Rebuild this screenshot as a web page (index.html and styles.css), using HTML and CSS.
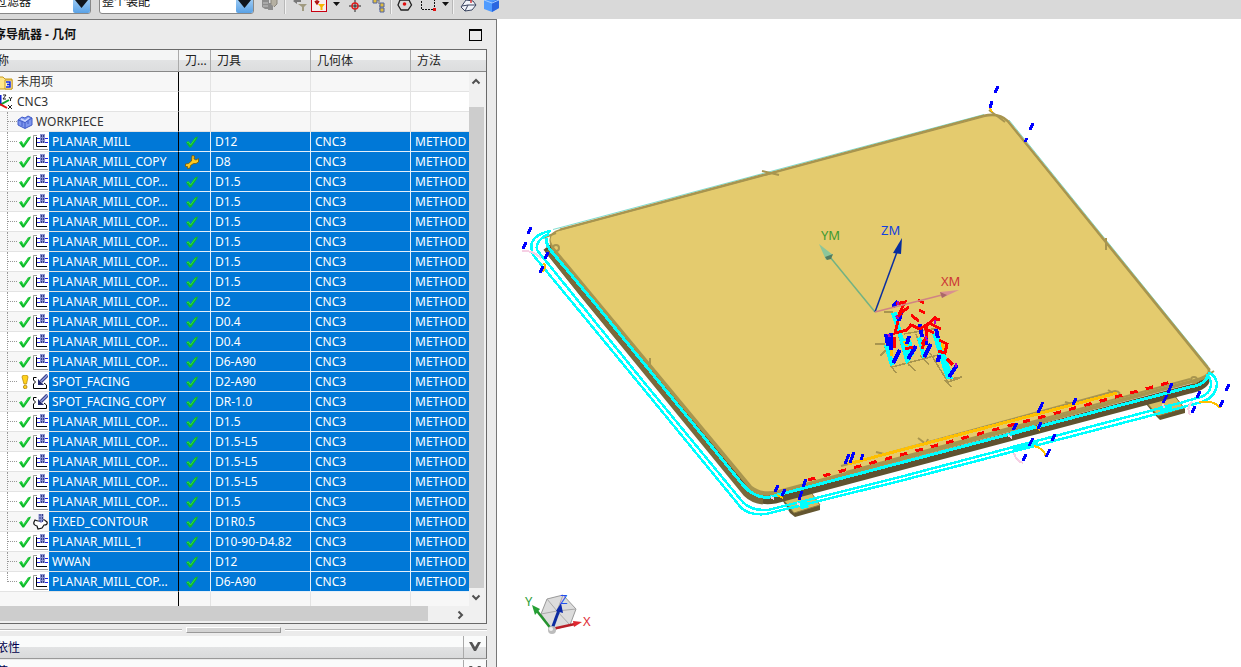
FILE: index.html
```html
<!DOCTYPE html>
<html lang="zh-CN">
<head>
<meta charset="utf-8">
<title>工序导航器 - 几何</title>
<link rel="stylesheet" href="styles.css">
</head>
<body>
<svg class="defs" aria-hidden="true">
  <linearGradient id="gArrow" x1="0" y1="0" x2="0" y2="1"><stop offset="0" stop-color="#c5e2fb"/><stop offset="1" stop-color="#5aa2e6"/></linearGradient>
  <symbol id="ok" viewBox="0 0 14 14"><path d="M1 7.5 3.5 6 5.5 9 10 2.5 13 1.5 12 4 6 12.5 4.5 12.5Z" fill="#10b82a"/><path d="M2 7.5 3.5 7 5.5 10 10.5 3.5" fill="none" stroke="#2ae04a"/></symbol>
  <symbol id="warn" viewBox="0 0 14 14"><path d="M4 2Q4 0 7 0T10 2L8.5 9H6Z" fill="#ffd21c" stroke="#b98a10" stroke-width=".8"/><circle cx="7.2" cy="12" r="1.8" fill="#ffd21c" stroke="#a87a10" stroke-width=".8"/></symbol>
  <symbol id="wrench" viewBox="0 0 14 14"><path d="M7 .5 9.500 1 9 4 11 5 13.500 3.500V7L11 8.500H8.500L5.500 10.500 5 13 2.500 13.500 2.500 11.500H.5V9L3.500 8.500 6.500 6Z" fill="#ffca20" stroke="#7a5800" stroke-width=".8"/></symbol>
  <symbol id="mill" viewBox="0 0 15 16"><path d="M0 0H15V16H0Z" fill="#fff"/><path d="M4 1.500H.5V15.500H15" fill="none" stroke="#999"/><path d="M3.500 3V12.500H14" fill="none" stroke="#000"/><path d="M4 4.500H7M4 8.500H7M12 4.500H15M12 8.500H15" stroke="#2020e8"/><path d="M7 0H12V9H7Z" fill="#8b92cf"/><path d="M8.500 1V9M10.500 1V9" stroke="#343c86" stroke-dasharray="2 1"/></symbol>
  <symbol id="spot" viewBox="0 0 15 16"><path d="M0 1H15V16H0Z" fill="#fff"/><path d="M3.500 3.500H.5V6L2.500 8 .5 10V14.500H13.500V11L11 9" fill="none" stroke="#000"/><path d="M14.500 1 8 7.500" stroke="#30387e" stroke-width="3.400"/><path d="M14.500 1 8 7.500" stroke="#8f98dc" stroke-width="1.600"/><path d="M5 5V11H11L8 8Z" fill="#222a70"/></symbol>
  <symbol id="contour" viewBox="0 0 15 16"><path d="M2 6Q6 8 8 6T14 8Q15 11 11 11L9 14 5 15 4 12Q0 11 1 8Z" fill="#fff" stroke="#111" stroke-width="1.200"/><path d="M5.500 0H10.500V7L8 9 5.500 7Z" fill="#8b92cf"/><path d="M7 0V8M9.500 0V8" stroke="#343c86" stroke-dasharray="2 1"/></symbol>
  <symbol id="chev" viewBox="0 0 10 10"><path d="M1.500 3.500 5 7 8.500 3.500" fill="none" stroke="#505050" stroke-width="2"/></symbol>
</svg>

<div class="app">
  <header class="toolbar">
    <div class="combo combo-filter">
      <select aria-label="选择过滤器"><option>过滤器</option></select>
      <svg class="combo-arrow" viewBox="0 0 17 22"><rect width="17" height="22" rx="2" fill="url(#gArrow)"/><path d="M2 9H15L8.500 17Z" fill="#10151c"/></svg>
    </div>
    <div class="combo combo-scope">
      <select aria-label="选择范围"><option>整个装配</option></select>
      <svg class="combo-arrow" viewBox="0 0 17 22"><rect width="17" height="22" rx="2" fill="url(#gArrow)"/><path d="M2 9H15L8.500 17Z" fill="#10151c"/></svg>
    </div>
    <button class="tool" type="button" aria-label="部件"><svg viewBox="0 0 22 24"><path d="M3 6H8V10H10V19H6L3 17ZM10 13H14V20H9" fill="#8d8d8d"/><path d="M4 13H9M4 16H9" stroke="#c5c5c5"/><path d="M12 14V9H18V14L15 17" fill="#b5b0a2" stroke="#89857a"/></svg></button>
    <span class="sep"></span>
    <button class="tool" type="button" aria-label="重置过滤器"><svg viewBox="0 0 22 24"><path d="M4 11 8 8V14Z" fill="#777"/><path d="M7 11H12" stroke="#777" stroke-width="2"/><path d="M9 14H18L15 17V21H13V17Z" fill="#a09a80"/></svg></button>
    <button class="tool" type="button" aria-label="过滤"><svg viewBox="0 0 22 24"><rect x=".5" y="4.500" width="15" height="17" fill="#f8eeee" stroke="#c80010"/><path d="M4 11 6 14 8 11M6 9V14" fill="none" stroke="#b01010" stroke-width="1.500"/><path d="M7 14H14L11.500 17V20H9.500V17Z" fill="#f7b500"/></svg></button>
    <button class="caret" type="button" aria-label="更多过滤"><svg viewBox="0 0 10 24"><path d="M0 12H7L3.500 16Z" fill="#111"/></svg></button>
    <button class="tool" type="button" aria-label="捕捉点"><svg viewBox="0 0 22 24"><path d="M12 10V22M6 16H18" stroke="#222"/><circle cx="12" cy="16" r="3" fill="none" stroke="#e02020" stroke-width="1.500"/></svg></button>
    <button class="tool" type="button" aria-label="导航树"><svg viewBox="0 0 22 24"><path d="M9 10H14V14M15 15V20H18" fill="none" stroke="#666"/><path d="M8 9H12V13H8ZM15 13H19V17H15ZM15 18H19V22H15Z" fill="#e0bd3e" stroke="#5062a0"/></svg></button>
    <span class="sep"></span>
    <button class="tool" type="button" aria-label="定向"><svg viewBox="0 0 22 24"><path d="M5 10H14L16.500 15 13 20H6L3 15Z" fill="none" stroke="#222" stroke-width="1.300"/><circle cx="9.500" cy="14" r="1.800" fill="#e01010"/></svg></button>
    <button class="tool" type="button" aria-label="矩形选择"><svg viewBox="0 0 22 24"><path d="M4.500 8V19.500H17.500V8" fill="none" stroke="#111" stroke-dasharray="2 1"/><path d="M16 18H19V21H16Z" fill="#e01010"/></svg></button>
    <button class="caret" type="button" aria-label="更多选择"><svg viewBox="0 0 10 24"><path d="M3 12H10L6.500 16Z" fill="#111"/></svg></button>
    <span class="sep"></span>
    <button class="tool" type="button" aria-label="边框显示"><svg viewBox="0 0 22 24"><path d="M4 17 9 10 16 11 19 15 15 20 8 21Z" fill="#f2f4fa" stroke="#3b4560"/><path d="M8 21 11 15 19 15M11 15 5 16" fill="none" stroke="#3b4560"/><path d="M8 9H14V13" fill="none" stroke="#e04040" stroke-width="1.500"/></svg></button>
    <button class="tool" type="button" aria-label="着色"><svg viewBox="0 0 22 24"><path d="M5 8H20V18L13 22 5 19Z" fill="#4f9bff"/><path d="M13 12V22L20 18V9Z" fill="#2b66e0"/><path d="M5 10 13 13 20 10" fill="none" stroke="#a5cdff"/></svg></button>
  </header>

  <div class="work">
    <aside class="panel">
      <div class="title">
        <h1>序导航器 - 几何</h1>
        <button class="max" type="button" aria-label="最大化"></button>
      </div>
      <div class="frame">
        <div class="body">
          <table>
            <colgroup><col class="c-name"><col class="c-path"><col class="c-tool"><col class="c-geo"><col class="c-method"></colgroup>
            <thead><tr><th>称</th><th>刀...</th><th>刀具</th><th>几何体</th><th>方法</th></tr></thead>
            <tbody>
              <tr><td><div class="node root"><svg class="ic16" viewBox="0 0 16 16"><path d="M1 3H6L8 5H15V15H1Z" fill="#ffe68a" stroke="#c79a1c"/><path d="M8 6H15V15H8Z" fill="#fff4c8" stroke="#c79a1c"/><path d="M9 8H13V13H9M10 10.500H13" fill="none" stroke="#1028e8" stroke-width="1.500"/></svg><span>未用项</span></div></td><td></td><td></td><td></td><td></td></tr>
              <tr><td><div class="node root"><svg class="ic16" viewBox="0 0 16 16"><path d="M3 11 12 6" fill="none" stroke="#10a030" stroke-width="2"/><path d="M3.500 1V10" stroke="#1020d0" stroke-width="2"/><path d="M3 10 10 14" stroke="#e01010" stroke-width="2"/><path d="M6 1H9L6 5H9M12 3 13.500 5 15 3M13.500 5V7M11 11 15 15M15 11 11 15" fill="none" stroke="#222"/></svg><span>CNC3</span></div></td><td></td><td></td><td></td><td></td></tr>
              <tr><td><div class="node work-node"><i class="dots"></i><svg class="ic16" viewBox="0 0 16 16"><path d="M1 6 5 3 8 4 11 2 15 4V11L8 14.500 1 11Z" fill="#7f97ee" stroke="#405ac8"/><path d="M1 6 8 8.500 15 4M8 8.500V14M11 7V10M5 8V12" fill="none" stroke="#405ac8"/><path d="M4 5 8 7 12 4" fill="none" stroke="#cdd8ff" stroke-width="1.500"/></svg><span>WORKPIECE</span></div></td><td></td><td></td><td></td><td></td></tr>
              <tr class="sel"><td><div class="node"><i class="dots"></i><svg class="ic14"><use href="#ok"/></svg><svg class="op"><use href="#mill"/></svg><span>PLANAR_MILL</span></div></td><td><svg class="ic14"><use href="#ok"/></svg></td><td>D12</td><td>CNC3</td><td>METHOD</td></tr>
              <tr class="sel"><td><div class="node"><i class="dots"></i><svg class="ic14"><use href="#ok"/></svg><svg class="op"><use href="#mill"/></svg><span>PLANAR_MILL_COPY</span></div></td><td><svg class="ic14"><use href="#wrench"/></svg></td><td>D8</td><td>CNC3</td><td>METHOD</td></tr>
              <tr class="sel"><td><div class="node"><i class="dots"></i><svg class="ic14"><use href="#ok"/></svg><svg class="op"><use href="#mill"/></svg><span>PLANAR_MILL_COP...</span></div></td><td><svg class="ic14"><use href="#ok"/></svg></td><td>D1.5</td><td>CNC3</td><td>METHOD</td></tr>
              <tr class="sel"><td><div class="node"><i class="dots"></i><svg class="ic14"><use href="#ok"/></svg><svg class="op"><use href="#mill"/></svg><span>PLANAR_MILL_COP...</span></div></td><td><svg class="ic14"><use href="#ok"/></svg></td><td>D1.5</td><td>CNC3</td><td>METHOD</td></tr>
              <tr class="sel"><td><div class="node"><i class="dots"></i><svg class="ic14"><use href="#ok"/></svg><svg class="op"><use href="#mill"/></svg><span>PLANAR_MILL_COP...</span></div></td><td><svg class="ic14"><use href="#ok"/></svg></td><td>D1.5</td><td>CNC3</td><td>METHOD</td></tr>
              <tr class="sel"><td><div class="node"><i class="dots"></i><svg class="ic14"><use href="#ok"/></svg><svg class="op"><use href="#mill"/></svg><span>PLANAR_MILL_COP...</span></div></td><td><svg class="ic14"><use href="#ok"/></svg></td><td>D1.5</td><td>CNC3</td><td>METHOD</td></tr>
              <tr class="sel"><td><div class="node"><i class="dots"></i><svg class="ic14"><use href="#ok"/></svg><svg class="op"><use href="#mill"/></svg><span>PLANAR_MILL_COP...</span></div></td><td><svg class="ic14"><use href="#ok"/></svg></td><td>D1.5</td><td>CNC3</td><td>METHOD</td></tr>
              <tr class="sel"><td><div class="node"><i class="dots"></i><svg class="ic14"><use href="#ok"/></svg><svg class="op"><use href="#mill"/></svg><span>PLANAR_MILL_COP...</span></div></td><td><svg class="ic14"><use href="#ok"/></svg></td><td>D1.5</td><td>CNC3</td><td>METHOD</td></tr>
              <tr class="sel"><td><div class="node"><i class="dots"></i><svg class="ic14"><use href="#ok"/></svg><svg class="op"><use href="#mill"/></svg><span>PLANAR_MILL_COP...</span></div></td><td><svg class="ic14"><use href="#ok"/></svg></td><td>D2</td><td>CNC3</td><td>METHOD</td></tr>
              <tr class="sel"><td><div class="node"><i class="dots"></i><svg class="ic14"><use href="#ok"/></svg><svg class="op"><use href="#mill"/></svg><span>PLANAR_MILL_COP...</span></div></td><td><svg class="ic14"><use href="#ok"/></svg></td><td>D0.4</td><td>CNC3</td><td>METHOD</td></tr>
              <tr class="sel"><td><div class="node"><i class="dots"></i><svg class="ic14"><use href="#ok"/></svg><svg class="op"><use href="#mill"/></svg><span>PLANAR_MILL_COP...</span></div></td><td><svg class="ic14"><use href="#ok"/></svg></td><td>D0.4</td><td>CNC3</td><td>METHOD</td></tr>
              <tr class="sel"><td><div class="node"><i class="dots"></i><svg class="ic14"><use href="#ok"/></svg><svg class="op"><use href="#mill"/></svg><span>PLANAR_MILL_COP...</span></div></td><td><svg class="ic14"><use href="#ok"/></svg></td><td>D6-A90</td><td>CNC3</td><td>METHOD</td></tr>
              <tr class="sel"><td><div class="node"><i class="dots"></i><svg class="ic14"><use href="#warn"/></svg><svg class="op"><use href="#spot"/></svg><span>SPOT_FACING</span></div></td><td><svg class="ic14"><use href="#ok"/></svg></td><td>D2-A90</td><td>CNC3</td><td>METHOD</td></tr>
              <tr class="sel"><td><div class="node"><i class="dots"></i><svg class="ic14"><use href="#ok"/></svg><svg class="op"><use href="#spot"/></svg><span>SPOT_FACING_COPY</span></div></td><td><svg class="ic14"><use href="#ok"/></svg></td><td>DR-1.0</td><td>CNC3</td><td>METHOD</td></tr>
              <tr class="sel"><td><div class="node"><i class="dots"></i><svg class="ic14"><use href="#ok"/></svg><svg class="op"><use href="#mill"/></svg><span>PLANAR_MILL_COP...</span></div></td><td><svg class="ic14"><use href="#ok"/></svg></td><td>D1.5</td><td>CNC3</td><td>METHOD</td></tr>
              <tr class="sel"><td><div class="node"><i class="dots"></i><svg class="ic14"><use href="#ok"/></svg><svg class="op"><use href="#mill"/></svg><span>PLANAR_MILL_COP...</span></div></td><td><svg class="ic14"><use href="#ok"/></svg></td><td>D1.5-L5</td><td>CNC3</td><td>METHOD</td></tr>
              <tr class="sel"><td><div class="node"><i class="dots"></i><svg class="ic14"><use href="#ok"/></svg><svg class="op"><use href="#mill"/></svg><span>PLANAR_MILL_COP...</span></div></td><td><svg class="ic14"><use href="#ok"/></svg></td><td>D1.5-L5</td><td>CNC3</td><td>METHOD</td></tr>
              <tr class="sel"><td><div class="node"><i class="dots"></i><svg class="ic14"><use href="#ok"/></svg><svg class="op"><use href="#mill"/></svg><span>PLANAR_MILL_COP...</span></div></td><td><svg class="ic14"><use href="#ok"/></svg></td><td>D1.5-L5</td><td>CNC3</td><td>METHOD</td></tr>
              <tr class="sel"><td><div class="node"><i class="dots"></i><svg class="ic14"><use href="#ok"/></svg><svg class="op"><use href="#mill"/></svg><span>PLANAR_MILL_COP...</span></div></td><td><svg class="ic14"><use href="#ok"/></svg></td><td>D1.5</td><td>CNC3</td><td>METHOD</td></tr>
              <tr class="sel"><td><div class="node"><i class="dots"></i><svg class="ic14"><use href="#ok"/></svg><svg class="op"><use href="#contour"/></svg><span>FIXED_CONTOUR</span></div></td><td><svg class="ic14"><use href="#ok"/></svg></td><td>D1R0.5</td><td>CNC3</td><td>METHOD</td></tr>
              <tr class="sel"><td><div class="node"><i class="dots"></i><svg class="ic14"><use href="#ok"/></svg><svg class="op"><use href="#mill"/></svg><span>PLANAR_MILL_1</span></div></td><td><svg class="ic14"><use href="#ok"/></svg></td><td>D10-90-D4.82</td><td>CNC3</td><td>METHOD</td></tr>
              <tr class="sel"><td><div class="node"><i class="dots"></i><svg class="ic14"><use href="#ok"/></svg><svg class="op"><use href="#mill"/></svg><span>WWAN</span></div></td><td><svg class="ic14"><use href="#ok"/></svg></td><td>D12</td><td>CNC3</td><td>METHOD</td></tr>
              <tr class="sel"><td><div class="node last"><i class="dots"></i><svg class="ic14"><use href="#ok"/></svg><svg class="op"><use href="#mill"/></svg><span>PLANAR_MILL_COP...</span></div></td><td><svg class="ic14"><use href="#ok"/></svg></td><td>D6-A90</td><td>CNC3</td><td>METHOD</td></tr>
              <tr><td></td><td></td><td></td><td></td><td></td></tr>
            </tbody>
          </table>
          <div class="vscroll">
            <span class="cap"></span>
            <button class="up" type="button" aria-label="向上滚动"><svg class="chev"><use href="#chev"/></svg></button>
            <span class="vthumb"></span>
            <button class="down" type="button" aria-label="向下滚动"><svg class="chev"><use href="#chev"/></svg></button>
          </div>
        </div>
        <div class="hscroll">
          <span class="hthumb"></span>
          <button class="right" type="button" aria-label="向右滚动"><svg class="chev"><use href="#chev"/></svg></button>
        </div>
      </div>
      <div class="splitter"><i class="rule"></i><i class="grip"></i><i class="rule"></i></div>
      <section class="fold"><h2>依性</h2><button type="button" aria-label="展开相依性"><svg viewBox="0 0 12 10"><path d="M0 0H3L6 5 9 0H12L7 9H5Z" fill="#555"/></svg></button></section>
      <section class="fold"><h2>节</h2><button type="button" aria-label="展开细节"><svg viewBox="0 0 12 10"><path d="M0 0H3L6 5 9 0H12L7 9H5Z" fill="#555"/></svg></button></section>
    </aside>

    <main class="view">
      <svg class="scene" viewBox="497 19 744 648" preserveAspectRatio="xMinYMin meet" role="img" aria-label="刀轨三维视图">
        <!-- clamping tabs -->
        <g stroke-linejoin="round">
          <path d="M780 496 810 492 820 505V510L795 517 790 513Z" fill="#645630"/>
          <path d="M778 493 808 488 820 505 794 513Z" fill="#d5bd67" stroke="#8d7b43"/>
          <path d="M1146 404 1175 396 1185 409V413L1160 420 1155 415Z" fill="#645630"/>
          <path d="M1146 402 1174 395 1184 408 1158 416Z" fill="#d5bd67" stroke="#8d7b43"/>
        </g>
        <!-- plate sides -->
        <path d="M547 247 583 292 748 491Q757 502 775 499L1190 389Q1205 386 1206 378" fill="none" stroke="#5f5230" stroke-width="9"/>
        <path d="M548 250 584 295 746 493Q753 500 763 501" fill="none" stroke="#7a6a3c" stroke-width="7"/>
        <!-- top face -->
        <path d="M560 229 984 116Q999 112 1008 121L1210 370Q1214 377 1197 382L778 494Q760 499 750 490L552 250Q544 233 560 229Z" fill="#a8954f"/>
        <path d="M563 230 985 117Q999 114 1007 122L1207 369Q1211 375 1194 379L778 490Q762 494 752 486L553 246Q545 234 563 230Z" fill="#e4cb6e"/>
        <path d="M553 229.500 984 114.500M1009 120 1208 366" stroke="#7fded0" stroke-width="1"/>
        <path d="M560 229.500 984 115.500Q999 112 1008 121L1210 370" fill="none" stroke="#a8954f" stroke-width="2"/>
        <!-- front grooves -->
        <path d="M841 466 1115 391Q1122 392 1118 396M846 472 1190 379" fill="none" stroke="#a8954f" stroke-width="2"/>
        <path d="M1000 432 1016 424V430Z" fill="#a8954f"/>
        <g fill="none" stroke="#a8954f" stroke-width="2">
          <path d="M762 171 779 175M764 175 776 172M989 110 1005 122M1106 238V250M650 358V370M543 238 556 233M1203 378 1214 371M918 438 926 444 928 439M876 452 884 454M1108 390 1115 394M1065 402 1072 404"/>
          <circle cx="556" cy="248" r="3"/><circle cx="1194" cy="380" r="3"/>
        </g>
        <g shape-rendering="crispEdges">
        <path d="M848 464 1117 393" stroke="#ffc000" stroke-width="3"/>
        <path d="M808 480 1171 382" stroke="#f00" stroke-width="3" stroke-dasharray="7.500 8.400"/>
        <!-- profile tool paths -->
        <g fill="none" stroke="#0ff">
          <path d="M547 238Q545 244 552 252L593 301 743 485Q755 499 770 497L1060 421 1190 387Q1206 385 1208 374" stroke-width="3"/>
          <path d="M551 231Q537 233 532 242 530 250 534 256L637 381 738 504Q746 516 766 514L900 481 1180 408 1198 403Q1216 399 1217 383 1215 374 1208 373" stroke-width="2.500"/>
          <path d="M549 234Q535 240 537 250L643 381 741 500Q749 511 768 510L900 477 1180 403 1197 398Q1211 395 1211 383 1210 376 1206 375" stroke-width="2.500"/>
          <path d="M1013 449 1038 443M800 506 808 504M1160 410 1172 407" stroke-width="7"/>
          <path d="M1010 434 1034 427" stroke-width="4"/>
        </g>
        <!-- engage and retract arcs -->
        <g fill="none" stroke-width="2">
          <path d="M522 251Q532 250 541 258M1014 453Q1016 461 1023 463M1192 402Q1186 408 1190 415M771 497 774 499M797 503 800 505M1008 435 1012 438M1163 404 1164 408" stroke="#f6cfe4"/>
          <path d="M544 263Q547 269 541 272M1034 446Q1044 448 1046 457M1199 402Q1215 400 1220 408M777 495 783 498M1036 427 1040 430M990 108 992 112" stroke="#ffc000"/>
        </g>
        <path d="M531 227 528 234M526 242 523 249M548 252 545 259M543 266 540 273M998 86 995 93M992 101 990 108M1033 123 1030 130M1027 138 1025 142M778 485 775 492M785 489 782 496M806 479 803 487M802 491 799 500M849 454 845 464M854 452 850 463M863 454 861 460M1043 402 1038 413M1076 398 1073 405M1017 423 1013 430M1041 422 1038 429M1033 438 1029 446M1055 434 1052 441M1026 454 1023 461M1050 449 1046 457M1172 383 1168 393M1167 395 1163 403M1200 391 1197 398M1195 406 1192 413M1229 384 1226 391M1223 400 1220 407" stroke="#00f" stroke-width="3"/>
        <!-- engraved character tool paths -->
        <path d="M884 312H892L904 354 909 366M875 344H884L892 367 938 355M885 351 880 356M891 366 896 373M907 362 915 371M920 356 929 364M930 353 948 382 960 378M945 380 951 387M950 379 962 377M916 334 924 358M904 334 938 328" fill="none" stroke="#a8954f" stroke-width="1.500"/>
        <path d="M891 313 897 312 902 334 911 360 906 364 900 342ZM884 345 890 346 894 365 890 366ZM907 338 911 340 914 354 908 361 904 339ZM917 338 921 337 925 353 923 360ZM932 333 939 334 951 371 953 379 946 379Z" fill="#0ff"/>
        <path d="M904 341 907 346M942 343 944 350M922 343 924 347M891 350 892 356" stroke="#ffc000" stroke-width="3"/>
        <path d="M898 301 893 307M901 312 899 321M886 334 888 346M891 333 891 350M900 350 893 363M909 336 907 344M916 346 908 359M920 324 922 337M926 338V345M931 344 924 357M936 329 938 338M939 355 938 362M957 365 949 377" stroke="#00f" stroke-width="4"/>
        <path d="M896 304 905 302 899 314 909 307M896 318 902 313M898 321 895 333 907 330 911 325 920 329 929 323 941 329M936 317 926 326 927 336 922 344M919 310 925 313M911 315 919 321M933 318 940 320M895 337 894 348M905 349 913 347M922 349 924 343M939 340 947 344 945 353 938 351M947 359 953 365M924 328 934 333M918 300 924 303" fill="none" stroke="#f00" stroke-width="3"/>
        <path d="M898 301V305M896 316 899 319M888 334 890 337M935 320V324M926 336 927 341M956 363V367" stroke="#b000c8" stroke-width="2"/>
        </g>
        <!-- machine coordinate system -->
        <path d="M875 312 830 257" stroke="#72b283" stroke-width="1.500"/><path d="M819 244 833 255 826 260Z" fill="#8cc69a"/><path d="M825 257 833 254 831 259 827 260Z" fill="#547c60"/>
        <path d="M875 312 897 252" stroke="#0a2ea0" stroke-width="1.500"/><path d="M902 238 901 254 893 253Z" fill="#062d9e"/>
        <path d="M875 312 942 295" stroke="#d08484" stroke-width="1.500"/><path d="M959 290 942 298 940 292Z" fill="#d99090"/><path d="M940 292 947 295 942 298Z" fill="#a86868"/>
        <g class="axis">
          <text x="821" y="240" fill="#3f9a30">YM</text><text x="881" y="235" fill="#1240e0">ZM</text><text x="941" y="286" fill="#cc3636">XM</text>
        </g>
        <!-- view triad -->
        <path d="M547 599 563 595 576 609 570 625 552 630 541 614Z" fill="#dcdcdc" stroke="#999"/>
        <path d="M547 599 557 611 576 609M563 595 557 611 541 614M557 611 570 625" fill="none" stroke="#aaa"/>
        <path d="M552 630 537 611" stroke="#25932f" stroke-width="2.500"/><path d="M532 605 540 609 535 615Z" fill="#25a035"/>
        <path d="M552 629 575 624" stroke="#b82028" stroke-width="2.500"/><path d="M582 622 574 627 573 621Z" fill="#e02830"/>
        <path d="M552 629 559 610" stroke="#0c2ca0" stroke-width="3"/><path d="M561 603 563 613 556 611Z" fill="#0a28a8"/>
        <circle cx="552" cy="630" r="4" fill="#bcbcbc"/><circle cx="551" cy="629" r="2" fill="#eee"/>
        <g class="axis">
          <text x="525" y="606" fill="#31a03a">Y</text><text x="560" y="604" fill="#2450f0">Z</text><text x="583" y="626" fill="#e03038">X</text>
        </g>
      </svg>
    </main>
  </div>
</div>
</body>
</html>
```
FILE: styles.css
```css
* { box-sizing: border-box; }
body {
  margin: 0;
  overflow: hidden;
  background: #fff;
  color: #333;
  font: 12px/16px "Noto Sans", "Noto Sans CJK SC", sans-serif;
}
button { margin: 0; padding: 0; border: 0; background: none; font: inherit; }
svg { display: block; flex: none; }
.defs { position: absolute; width: 0; height: 0; }
.app { display: flex; flex-direction: column; height: 100vh; overflow: hidden; }

/* toolbar, scrolled partly out of the window */
.toolbar {
  display: flex;
  flex: none;
  align-items: center;
  height: 31px;
  margin: -12px 0 0 -20px;
  padding-bottom: 3px;
  background: #d9d9d9;
}
.combo {
  display: flex;
  height: 24px;
  border: 1px solid #888;
  border-radius: 3px;
  background: #fff;
}
.combo select {
  flex: 1;
  min-width: 0;
  padding: 0 2px;
  border: 0;
  appearance: none;
  background: none;
  color: #111;
  font: inherit;
}
.combo-filter { width: 111px; margin-right: 8px; }
.combo-filter select { padding-left: 14px; }
.combo-scope { width: 155px; margin-right: 5px; }
.combo-arrow { width: 17px; height: 22px; }
.tool, .tool svg { width: 22px; height: 24px; }
.caret, .caret svg { width: 10px; height: 24px; }
.sep { width: 2px; height: 24px; margin: 0 3px; border-left: 1px solid #b8b8b8; border-right: 1px solid #f2f2f2; }

.work { display: flex; flex: 1; min-height: 0; }

/* navigator panel, its left edge outside the window */
.panel {
  flex: none;
  width: 517px;
  margin-left: -20px;
  padding-right: 9px;
  border-top: 1px solid #777;
  border-right: 1px solid #777;
  background: #ebebeb;
  overflow: hidden;
}
.title { display: flex; align-items: center; justify-content: space-between; height: 29px; padding: 0 5px 0 14px; }
.title h1 { margin: 0; color: #111; font-size: 12px; font-weight: 700; }
.max { width: 13px; height: 12px; border: 1px solid #000; border-top-width: 2px; }
.frame { border: 1px solid #696969; border-width: 1px 1px 1px 0; background: #f0f0f0; }
.body { display: flex; height: 556px; overflow: hidden; }
table { flex: none; width: 489px; height: 0; border-spacing: 0; table-layout: fixed; }
.c-name { width: 199px; }
.c-path { width: 32px; }
.c-tool, .c-geo { width: 100px; }
.c-method { width: 58px; }
th {
  height: 22px;
  padding: 0 6px;
  border-right: 1px solid #aaa;
  border-bottom: 1px solid #888;
  background: linear-gradient(#f4f5f5 50%, #e2e3e4 50%, #dcddde);
  color: #222;
  font-weight: 400;
  text-align: left;
  white-space: nowrap;
}
th:first-child { padding-left: 17px; }
th:last-child, td:last-child { border-right: 0; }
td {
  height: 20px;
  padding: 0 4px;
  border-right: 1px solid #e3e3e3;
  border-bottom: 1px solid #e3e3e3;
  white-space: nowrap;
  overflow: hidden;
}
td:first-child { padding: 0; border-right-color: #000; }
td:nth-child(2) { padding-left: 6px; }
tbody tr { background: #fff; }
tbody tr:nth-child(odd) { background: #f7f7f7; }
.sel td { border-color: #e3effa; background: #0078d7; color: #fff; }
.sel td:first-child { border-color: #e3e3e3 #000 #e3e3e3 transparent; background: none; }
.sel td:last-child { padding-right: 0; }
.node { display: flex; align-items: center; height: 19px; padding-left: 27px; }
.node span { flex: 1; align-self: stretch; padding-left: 3px; line-height: 19px; }
.sel .node span { margin-left: 1px; background: #0078d7; }
.root { padding-left: 17px; }
.root span { padding-left: 4px; }
.dots { width: 11px; height: 20px; border-left: 1px dotted #999; background: repeating-linear-gradient(90deg, #999 0 1px, transparent 1px 2px) 0 50% / 9px 1px no-repeat; }
.last .dots { height: 10px; align-self: flex-start; background-position: 0 100%; }
.work-node .dots { width: 10px; }
.ic14 { width: 14px; height: 14px; margin-top: 1px; }
.ic16 { width: 16px; height: 16px; margin-top: 1px; }
.op { width: 15px; height: 16px; margin: 1px 0 0 1px; }

.vscroll { display: flex; flex: 1; flex-direction: column; }
.cap { height: 22px; border-bottom: 1px solid #888; background: linear-gradient(#f4f5f5 50%, #e2e3e4 50%, #dcddde); }
.up { height: 35px; padding: 4px 2px 20px 2px; }
.up .chev { transform: rotate(180deg); }
.vthumb { flex: 1; width: 15px; background: #cdcdcd; }
.down { height: 18px; padding: 4px 2px; }
.chev { width: 10px; height: 10px; }
.hscroll { display: flex; justify-content: space-between; height: 17px; padding-right: 21px; }
.hthumb { flex: none; width: 448px; height: 15px; background: #cdcdcd; }
.right { padding: 3px 0; }
.right .chev { transform: rotate(-90deg); }

.splitter { display: flex; align-items: center; gap: 4px; height: 12px; }
.rule { flex: 1; height: 2px; border-top: 1px solid #b5b5b5; background: #fff; }
.grip { width: 95px; height: 6px; border: 1px solid #999; border-top-color: #fff; border-left-color: #fff; background: #d3d3d3; }

.fold { display: flex; height: 23px; margin-bottom: 1px; border-bottom: 1px solid #999; border-right: 1px solid #777; background: linear-gradient(#fafbfb 50%, #e2e3e4 50%, #d9dadb); }
.fold h2 { flex: 1; margin: 0; padding-left: 16px; color: #00004c; font-size: 12px; font-weight: 400; line-height: 23px; }
.fold button { display: flex; align-items: center; justify-content: center; width: 23px; border-left: 1px solid #aaa; }
.fold svg { width: 12px; height: 10px; }

.view { flex: 1; min-width: 0; background: #fff; }
.scene { width: 100%; height: 100%; }
.axis { font: 13px "Noto Sans", sans-serif; }
```
